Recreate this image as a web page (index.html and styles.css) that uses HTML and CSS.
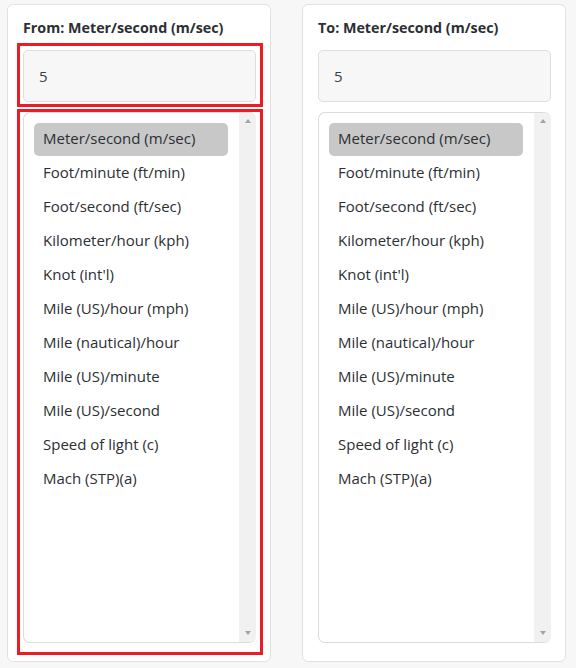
FILE: index.html
```html
<!DOCTYPE html>
<html lang="en">
<head>
    <meta charset="UTF-8">
    <meta name="viewport" content="width=device-width, initial-scale=1.0">
    <title>Speed Converter</title>
    <link rel="stylesheet" href="styles.css">
</head>
<body>
    <div class="converter">
        <!-- From side -->
        <div class="card">
            <label class="card-title" for="from-value">From: Meter/second (m/sec)</label>
            <div class="field marked">
                <input type="text" id="from-value" class="value-input" value="5">
            </div>
            <div class="field field-list marked">
                <div class="unit-select">
                    <ul class="unit-list">
                        <li class="unit selected">Meter/second (m/sec)</li>
                        <li class="unit">Foot/minute (ft/min)</li>
                        <li class="unit">Foot/second (ft/sec)</li>
                        <li class="unit">Kilometer/hour (kph)</li>
                        <li class="unit">Knot (int'l)</li>
                        <li class="unit">Mile (US)/hour (mph)</li>
                        <li class="unit">Mile (nautical)/hour</li>
                        <li class="unit">Mile (US)/minute</li>
                        <li class="unit">Mile (US)/second</li>
                        <li class="unit">Speed of light (c)</li>
                        <li class="unit">Mach (STP)(a)</li>
                    </ul>
                    <div class="scrollbar">
                        <span class="arrow arrow-up"></span>
                        <span class="arrow arrow-down"></span>
                    </div>
                </div>
            </div>
        </div>

        <!-- To side -->
        <div class="card">
            <label class="card-title" for="to-value">To: Meter/second (m/sec)</label>
            <div class="field">
                <input type="text" id="to-value" class="value-input" value="5">
            </div>
            <div class="field field-list">
                <div class="unit-select">
                    <ul class="unit-list">
                        <li class="unit selected">Meter/second (m/sec)</li>
                        <li class="unit">Foot/minute (ft/min)</li>
                        <li class="unit">Foot/second (ft/sec)</li>
                        <li class="unit">Kilometer/hour (kph)</li>
                        <li class="unit">Knot (int'l)</li>
                        <li class="unit">Mile (US)/hour (mph)</li>
                        <li class="unit">Mile (nautical)/hour</li>
                        <li class="unit">Mile (US)/minute</li>
                        <li class="unit">Mile (US)/second</li>
                        <li class="unit">Speed of light (c)</li>
                        <li class="unit">Mach (STP)(a)</li>
                    </ul>
                    <div class="scrollbar">
                        <span class="arrow arrow-up"></span>
                        <span class="arrow arrow-down"></span>
                    </div>
                </div>
            </div>
        </div>
    </div>
</body>
</html>
```

FILE: styles.css
```css
body {
    font-family: 'Open Sans', 'Liberation Sans', sans-serif;
    background-color: #f7f7f7;
    color: #212529;
    margin: 0;
    padding: 4px 0 0 7px;
}

.converter {
    display: flex;
    gap: 31px;
}

.card {
    width: 264px;
    box-sizing: border-box;
    background-color: #fff;
    border: 1px solid #e2e2e2;
    border-radius: 6px;
    padding: 13px 7px 6px 9px;
    display: flex;
    flex-direction: column;
}

.card-title {
    display: block;
    font-size: 14.3px;
    font-weight: 700;
    line-height: 20px;
    color: #2b2f33;
    margin: 0 0 5px 6px;
}

.field {
    border: 3px solid transparent;
    padding: 4px 4px 2px 3px;
    margin-bottom: 2px;
}

.field.marked {
    border-color: #ed1c24;
}

.field-list {
    padding: 0 4px 9px 3px;
    margin-bottom: 0;
}

.value-input {
    display: block;
    width: 100%;
    height: 52px;
    box-sizing: border-box;
    background-color: #f7f7f7;
    border: 1px solid #dedede;
    border-radius: 5px;
    padding: 0 15px;
    font-family: inherit;
    font-size: 15px;
    color: #3a3f44;
    outline: none;
}

.unit-select {
    display: flex;
    height: 531px;
    box-sizing: border-box;
    border: 1px solid #dcdcdc;
    border-right: none;
    border-radius: 7px;
    overflow: hidden;
}

.unit-list {
    flex: 1;
    list-style: none;
    margin: 0;
    padding: 10px 11px 0 10px;
}

.unit {
    height: 33px;
    box-sizing: border-box;
    line-height: 31px;
    padding: 0 9px 2px;
    margin-bottom: 1px;
    font-size: 15px;
    color: #2b2f33;
    border-radius: 5px;
    white-space: nowrap;
}

.unit.selected {
    background-color: #c8c8c8;
}

.scrollbar {
    width: 17px;
    margin-top: -1px;
    margin-bottom: -1px;
    background-color: #f1f1f1;
    display: flex;
    flex-direction: column;
    justify-content: space-between;
    align-items: center;
    padding: 7px 0 8px;
}

.arrow {
    width: 0;
    height: 0;
    border-left: 3.5px solid transparent;
    border-right: 3.5px solid transparent;
}

.arrow-up {
    border-bottom: 4px solid #a3a3a3;
}

.arrow-down {
    border-top: 4px solid #a3a3a3;
}
```
